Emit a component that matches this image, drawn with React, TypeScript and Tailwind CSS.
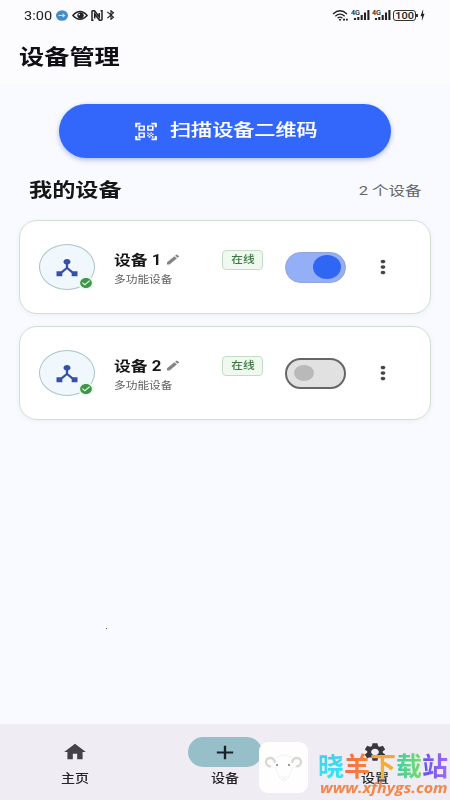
import { ReactNode } from "react"
import { MdAdd, MdBluetooth, MdBolt, MdCheckCircle, MdDeviceHub, MdEdit, MdHome, MdMoreVert, MdQrCodeScanner, MdSettings } from "react-icons/md"

type DeviceType = {
    name: string
    on: boolean
}

const devices: DeviceType[] = [
    { name: "设备 1", on: true },
    { name: "设备 2", on: false },
]

// the interface uses wide lettering, so every label is stretched sideways
const Wide = ({ children, className = "" }: { children: ReactNode; className?: string }) => (
    <span className={`inline-block whitespace-nowrap scale-x-[1.22] ${className}`}>{children}</span>
)

const Signal = () => (
    <svg className="h-[12px] w-[19px]" viewBox="0 0 19 12">
        <text x="0" y="5.5" fontSize="7" fontWeight="500" fill="#222" textLength="9" lengthAdjust="spacingAndGlyphs">4G</text>
        <path d="M4 9v2M7.3 8v3M10.7 6v5M14 3.5v7.5M17.4 1v10" stroke="#222" strokeWidth="2.1" />
    </svg>
)

const StatusBar = () => (
    <div className="flex h-[30px] items-center justify-between pl-[24px] pr-[23px] text-[#222]">
        <div className="flex items-center">
            <span className="w-[28px] text-[13px] leading-none"><Wide className="origin-left scale-x-[1.12]!">3:00</Wide></span>
            <svg className="ml-[4px] h-[11px] w-[12px]" viewBox="0 0 12 11">
                <ellipse cx="6" cy="5.5" rx="6" ry="5.2" fill="#438bca" />
                <path d="M2.5 5.5h6M6.5 4l2 1.5-2 1.5" stroke="#c5e3f8" strokeWidth="1.2" fill="none" />
            </svg>
            <svg className="ml-[4px] h-[11px] w-[16px]" viewBox="0 0 16 11" fill="none" stroke="#222">
                <path d="M.8 5.5Q8-2.5 15.2 5.5Q8 13 .8 5.5Z" strokeWidth="1.3" />
                <circle cx="8.5" cy="5.5" r="2.8" fill="#222" />
                <circle cx="7.2" cy="4.6" r=".8" fill="white" stroke="none" />
            </svg>
            <svg className="ml-[3px] h-[11px] w-[12px]" viewBox="0 0 12 11" fill="none" stroke="#222">
                <path d="M2.5 10.2H1V1.5Q1 .8 2 .8h1.5L8.3 7V3M9.5 .8H11v8.7q0 .7-1 .7H8.5L3.7 4v4.5" strokeWidth="1.5" />
            </svg>
            <MdBluetooth preserveAspectRatio="none" className="ml-[1px] h-[12px] w-[14px]" />
        </div>
        <div className="flex items-center">
            <svg className="h-[11px] w-[17px]" viewBox="0 0 17 11" fill="none" stroke="#222">
                <path d="M1 4Q8-2.5 15 4M3.3 6.2q4.7-4 9.4 0M5.6 8.2q2.4-2 4.8 0" strokeWidth="1.3" />
                <path d="M7 9.8h2M11 9.6h2M14 9.6h1.8" strokeWidth="1.6" />
            </svg>
            <span className="ml-[2px]"><Signal /></span>
            <span className="ml-[2px]"><Signal /></span>
            <span className="ml-[2px] flex h-[11px] w-[23px] items-center justify-center rounded-[3px] border border-[#333] text-[9px] font-medium leading-none">
                <Wide className="translate-y-[0.5px]">100</Wide>
            </span>
            <span className="h-[3px] w-[2px] bg-[#333]" />
            <MdBolt preserveAspectRatio="none" className="h-[14px] w-[9px]" />
        </div>
    </div>
)

const Toggle = ({ on }: { on: boolean }) => (
    <div className={`flex h-[31px] w-[61px] items-center rounded-full ${on ? "justify-end border border-[#91a5dd] bg-[#95aef8] pr-[4px]" : "border-2 border-[#666] bg-[#e1e1e1] pl-[7px]"}`}>
        <span className={on ? "h-[24px] w-[28px] rounded-[50%] bg-[#3066f4]" : "h-[16px] w-[20px] rounded-[50%] bg-[#b9b9b9]"} />
    </div>
)

const DeviceCard = ({ device }: { device: DeviceType }) => (
    <div className="flex h-[94px] items-center rounded-[18px] border-[1.5px] border-[#cfe0d2] bg-white pl-[19px] shadow-[0_1px_5px_rgba(80,110,90,0.08)]">
        <div className="relative flex h-[46px] w-[56px] items-center justify-center rounded-[50%] border-[1.5px] border-[#a9c4c8] bg-[#f0f8fe]">
            <MdDeviceHub preserveAspectRatio="none" className="h-[23px] w-[28px] text-[#3550a5]" />
            <span className="absolute -bottom-[1px] right-0 flex h-[14px] w-[16px] items-center justify-center rounded-[50%] bg-[#e9f8ed]">
                <MdCheckCircle preserveAspectRatio="none" className="h-[12px] w-[14px] text-[#409348]" />
            </span>
        </div>
        <div className="ml-[19px] w-[108px] pt-[4px]">
            <div className="flex h-[20px] items-center">
                <span className="w-[51px] text-[14px] font-bold leading-5 text-[#171717]"><Wide className="origin-left scale-x-[1.2]!">{device.name}</Wide></span>
                <MdEdit preserveAspectRatio="none" className="h-[13px] w-[16px] text-[#858585]" />
            </div>
            <div className="mt-[1px] h-[18px] text-[10px] leading-[18px] text-[#606060]"><Wide className="origin-left scale-x-[1.17]!">多功能设备</Wide></div>
        </div>
        <div className="mb-[15px] flex h-[20px] w-[41px] items-center justify-center rounded-[4px] border border-[#c3ddc5] bg-[#eff9f0] text-[10px] font-medium text-[#397841]">
            <Wide className="scale-x-[1.17]!">在线</Wide>
        </div>
        <div className="ml-[22px]"><Toggle on={device.on} /></div>
        <MdMoreVert preserveAspectRatio="none" className="ml-[23px] h-[22px] w-[28px] text-[#444]" />
    </div>
)

const Watermark = () => (
    <div className="absolute bottom-0 left-[259px] flex h-[58px] w-[191px]">
        <svg className="h-[51px] w-[49px] shrink-0" viewBox="0 0 49 51" fill="none">
            <rect width="49" height="51" rx="9" fill="#fefefe" />
            <path d="M16 21c-1-7-9-6-9-1 0 3 3 5 5 4M33 21c1-7 9-6 9-1 0 3-3 5-5 4" stroke="#dad8d0" strokeWidth="2.3" />
            <path d="M17 16c5-4 11-4 16 0M16 25l5 11q4 5 8 0l5-11M22 34l3 2 3-2M25 36v2" stroke="#f1f1ef" />
            <circle cx="18" cy="23" r="1" fill="#777" />
            <circle cx="30" cy="23" r="1" fill="#777" />
        </svg>
        <div className="ml-[10px] pt-[6px]">
            <div className="flex text-[26px] font-bold leading-[38px]">
                <span className="bg-linear-to-b from-[#47c4ef] to-[#17f5f4] bg-clip-text text-transparent">晓</span>
                <span className="bg-linear-to-r from-[#f56a45] to-[#f58a32] bg-clip-text text-transparent">羊</span>
                <span className="bg-linear-to-b from-[#f89d38] to-[#f7bc2e] bg-clip-text text-transparent">下</span>
                <span className="bg-linear-to-r from-[#38cfa0] to-[#75dc66] bg-clip-text text-transparent">载</span>
                <span className="bg-linear-to-r from-[#6254e8] to-[#a06bf4] bg-clip-text text-transparent">站</span>
            </div>
            <div className="-mt-[9px] ml-[2px] origin-left scale-x-[1.07] font-['Open_Sans'] text-[15px] font-bold italic leading-5 text-[#f38648]">www.xfhygs.com</div>
        </div>
    </div>
)

const NavItem = ({ label, active, children }: { label: string; active?: boolean; children: ReactNode }) => (
    <div className="flex w-[150px] flex-col items-center pt-[13px]">
        <span className={`flex h-[30px] w-[74px] items-center justify-center rounded-full ${active ? "bg-[#96bfca]" : ""}`}>{children}</span>
        <span className="mt-[2px] text-[12px] font-medium leading-5 text-[#242328]"><Wide className="scale-x-[1.17]!">{label}</Wide></span>
    </div>
)

const App = () => {
    return (
        <div className="relative flex h-[800px] w-[450px] flex-col overflow-hidden bg-[#f8faff] font-[Roboto,'Noto_Sans_CJK_SC',sans-serif]">
            <header className="h-[84px] bg-[#fcfbfe]">
                <StatusBar />
                <h1 className="pl-[19px] pt-[12px] text-[21px] font-bold leading-[30px] text-[#101014]"><Wide className="origin-left scale-x-[1.2]!">设备管理</Wide></h1>
            </header>
            <main className="flex-1 px-[19px] pt-[20px]">
                <button className="mx-auto flex h-[54px] w-[332px] items-center rounded-full bg-[#3366fa] pl-[74px] text-white shadow-[0_2px_5px_rgba(35,70,180,0.35)]">
                    <MdQrCodeScanner preserveAspectRatio="none" className="h-[21px] w-[26px]" />
                    <span className="ml-[11px] text-[17px] font-medium"><Wide className="origin-left scale-x-[1.24]! [-webkit-text-stroke:0.15px_white]">扫描设备二维码</Wide></span>
                </button>
                <div className="flex h-[62px] items-center justify-between pl-[10px] pr-[10px] pt-[4px]">
                    <h2 className="text-[19px] font-bold text-[#161616]"><Wide className="origin-left">我的设备</Wide></h2>
                    <span className="text-[13px] text-[#666]"><Wide className="origin-right translate-x-[1px] scale-x-[1.27]!">2 个设备</Wide></span>
                </div>
                <div className="flex flex-col gap-3">
                    {devices.map((device) => (
                        <DeviceCard key={device.name} device={device} />
                    ))}
                </div>
            </main>
            <nav className="flex h-[76px] bg-[#efedf3]">
                <NavItem label="主页"><MdHome preserveAspectRatio="none" className="h-[22px] w-[26px] text-[#444149]" /></NavItem>
                <NavItem label="设备" active><MdAdd preserveAspectRatio="none" className="h-[23px] w-[28px] text-[#18222a]" /></NavItem>
                <NavItem label="设置"><MdSettings preserveAspectRatio="none" className="h-[22px] w-[26px] text-[#38373e]" /></NavItem>
            </nav>
            <span className="absolute left-[106px] top-[628px] size-px bg-[#555]" />
            <Watermark />
        </div>
    )
}

export default App
